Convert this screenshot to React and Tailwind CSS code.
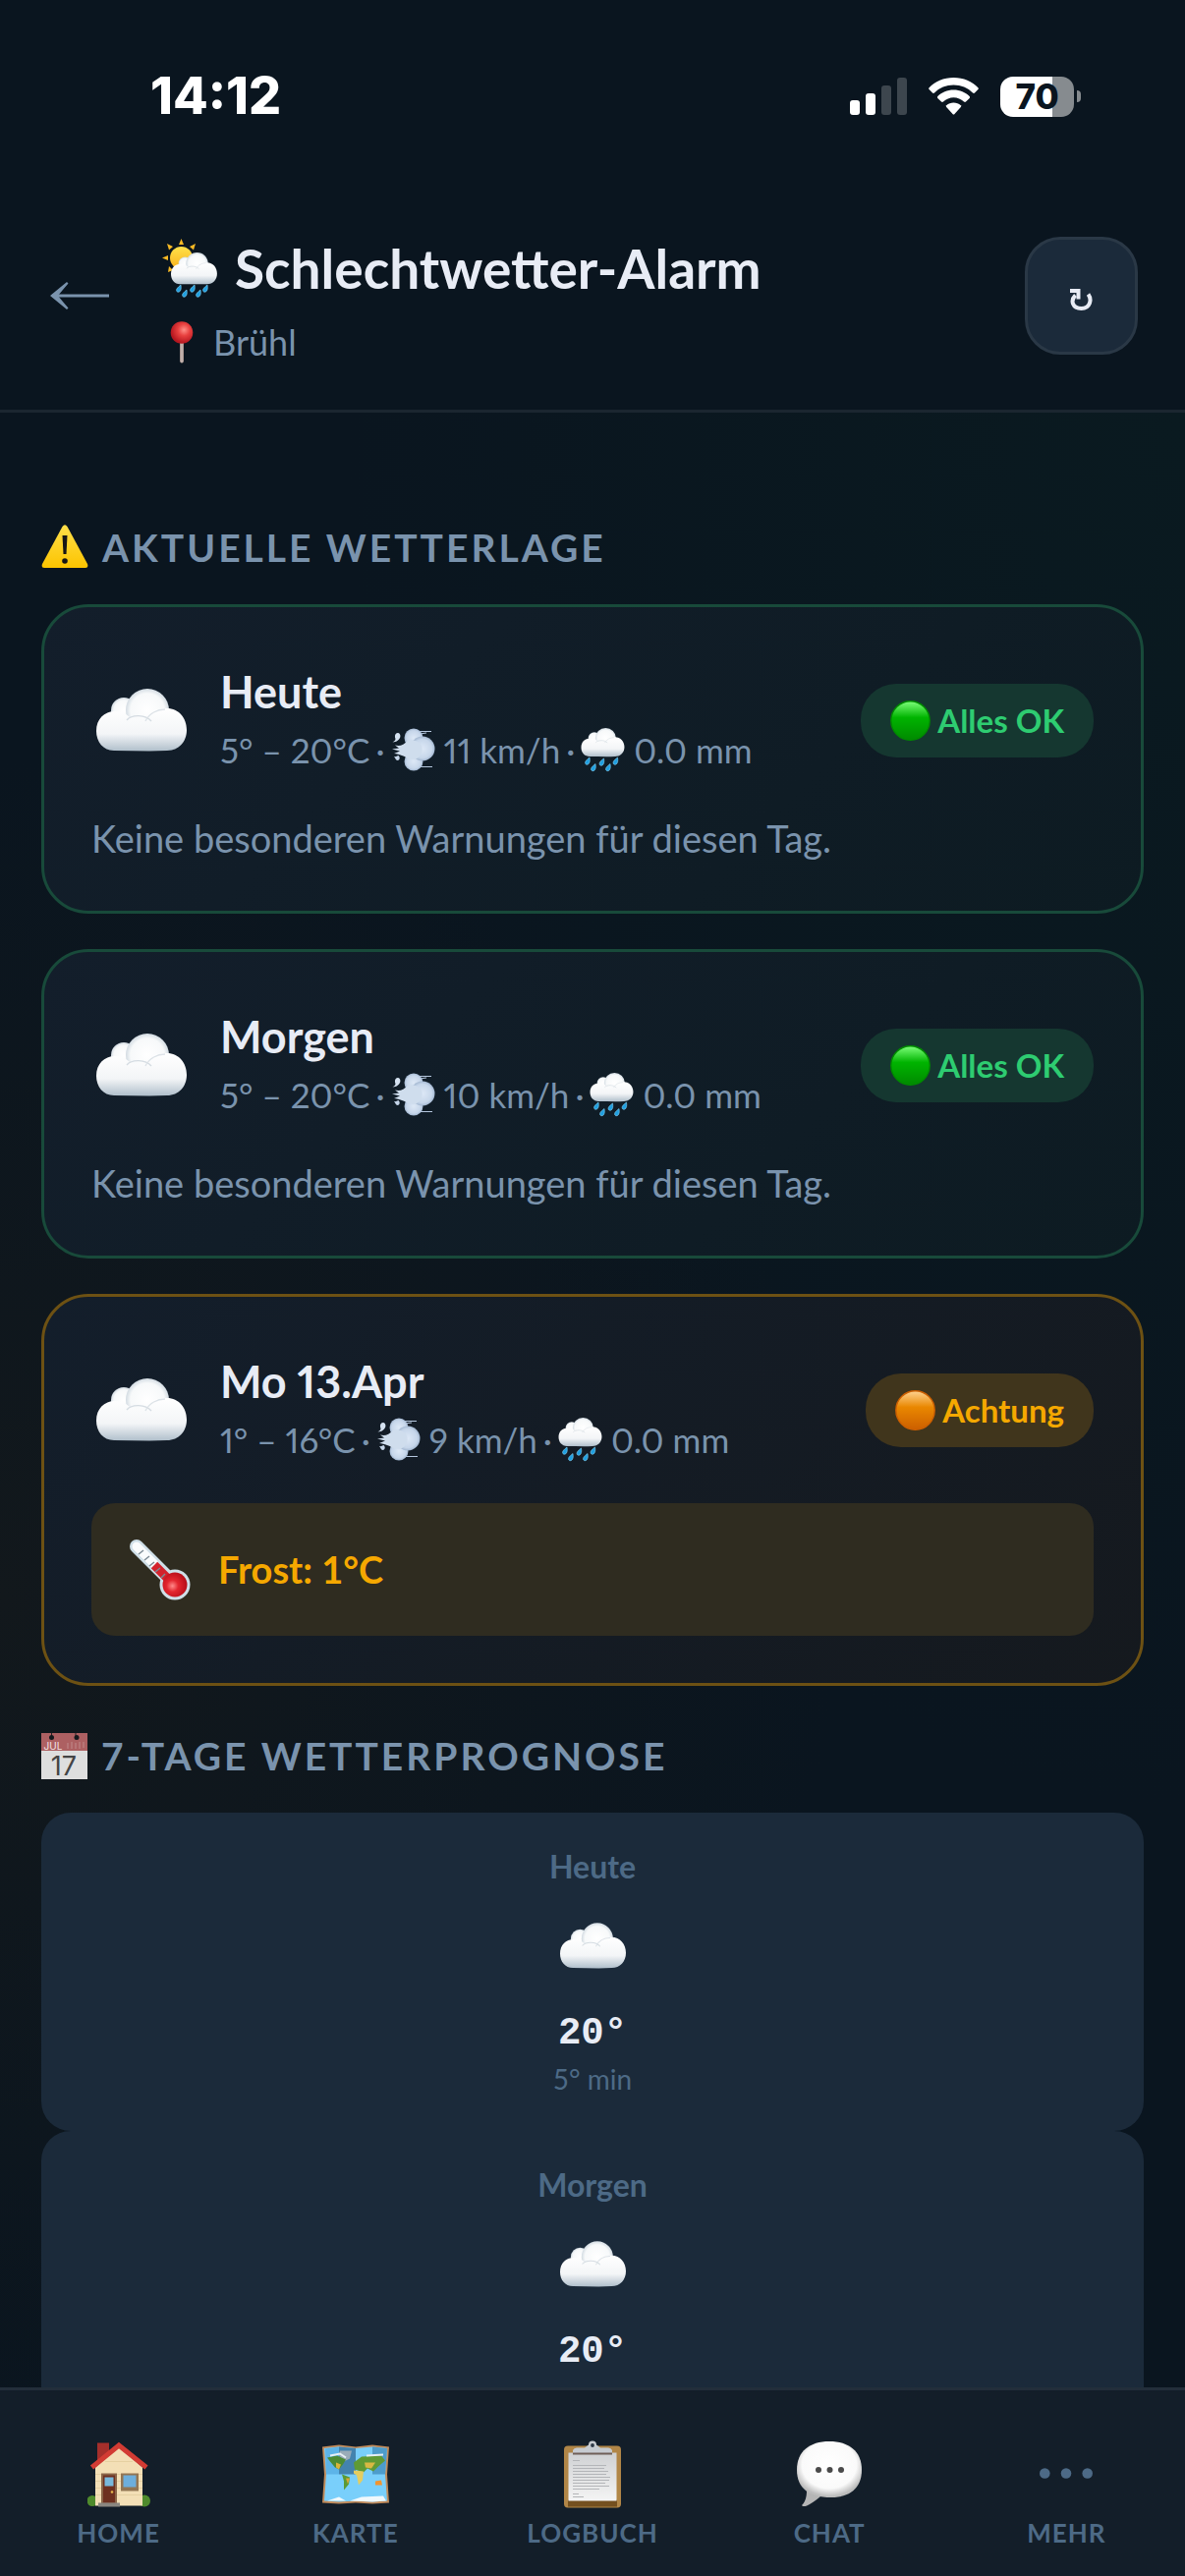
import React from "react";

/* ---------- Emoji-style drawings ---------- */

function CloudShape({ id }) {
  return (
    <>
      <defs>
        <linearGradient id={id} x1="0" y1="0" x2="0" y2="1">
          <stop offset="0" stopColor="#ffffff" />
          <stop offset="0.6" stopColor="#f3f5f7" />
          <stop offset="1" stopColor="#b0bfcb" />
        </linearGradient>
        <radialGradient id={id + "a"} cx="0.5" cy="0.5" r="0.52">
          <stop offset="0" stopColor="#ffffff" />
          <stop offset="0.75" stopColor="#f7f9fa" />
          <stop offset="1" stopColor="#ccd6de" />
        </radialGradient>
      </defs>
      <circle cx="28" cy="22" r="13" fill={`url(#${id}a)`} />
      <circle cx="52" cy="22" r="22" fill={`url(#${id}a)`} />
      <path
        d="M18 63C7 63 0 54 0 43C0 31 8 23 19 23C25 23 30 25 34 29C42 32 49 31 54 25C59 21 66 20 72 20C84 20 92 30 92 42C92 54 84 63 72 63C54 64 36 63 18 63Z"
        fill={`url(#${id})`}
      />
      <path d="M31 32C36 26 50 26 56 33" fill="none" stroke="#d5dce2" strokeWidth="1.4" />
      <path d="M50 33C54 25 62 21 70 21" fill="none" stroke="#dde3e8" strokeWidth="1.4" />
    </>
  );
}

function Cloud({ className, id }) {
  return (
    <svg className={className} viewBox="0 0 92 64" aria-hidden="true">
      <CloudShape id={id} />
    </svg>
  );
}

function Drop({ x, y }) {
  return (
    <path
      transform={`translate(${x} ${y})`}
      d="M5 0C5.600 3 5.400 6.400 3 7.200C0.900 7.700 0 5.800 0.900 4C1.800 2.400 3.500 1.300 5 0Z"
      fill="#1f9fe0"
      stroke="#86d3f5"
      strokeWidth="0.600"
    />
  );
}

function RainCloud({ className, id }) {
  return (
    <svg className={className} viewBox="0 0 45 46" aria-hidden="true">
      <g transform="translate(0.500 1) scale(0.478 0.460)">
        <CloudShape id={id} />
      </g>
      <Drop x={4} y={31} />
      <Drop x={10} y={37.5} />
      <Drop x={18.5} y={32} />
      <Drop x={25} y={37.5} />
      <Drop x={32.5} y={31} />
    </svg>
  );
}

function SunRainCloud({ className }) {
  return (
    <svg className={className} viewBox="0 0 56 60" aria-hidden="true">
      <defs>
        <linearGradient id="sun" x1="0" y1="0" x2="0" y2="1">
          <stop offset="0" stopColor="#ffe14a" />
          <stop offset="1" stopColor="#f8b21c" />
        </linearGradient>
      </defs>
      <g fill="#f7b924">
        <path d="M19.500 0L22 6L17 6Z" />
        <path d="M34 5L32 11.500L28 8Z" />
        <path d="M5 5L11 8L7 11.500Z" />
        <path d="M0 19.500L6 17L6 22Z" />
        <path d="M6 34L7 28L11 32Z" />
      </g>
      <circle cx="19.500" cy="19.500" r="11.500" fill="url(#sun)" />
      <g transform="translate(9 14) scale(0.510)">
        <CloudShape id="sunCloud" />
      </g>
      <Drop x={14} y={47} />
      <Drop x={20} y={52} />
      <Drop x={28} y={47} />
      <Drop x={34} y={52} />
      <Drop x={41} y={47} />
    </svg>
  );
}

function Pin({ className }) {
  return (
    <svg className={className} viewBox="0 0 24 43" aria-hidden="true">
      <defs>
        <radialGradient id="pin" cx="0.600" cy="0.380" r="0.600">
          <stop offset="0" stopColor="#ff8f87" />
          <stop offset="0.450" stopColor="#e8403f" />
          <stop offset="1" stopColor="#b3161f" />
        </radialGradient>
      </defs>
      <path d="M10 20H14V41Q12 44 10 41Z" fill="#a89590" />
      <path d="M12 20V42" stroke="#d8cbc7" strokeWidth="1" />
      <circle cx="12" cy="11.500" r="11.300" fill="url(#pin)" />
    </svg>
  );
}

function Warning({ className }) {
  return (
    <svg className={className} viewBox="0 0 48 48" aria-hidden="true">
      <defs>
        <linearGradient id="warn" x1="0" y1="0" x2="0" y2="1">
          <stop offset="0" stopColor="#ffdf4a" />
          <stop offset="1" stopColor="#fcc400" />
        </linearGradient>
      </defs>
      <path d="M21.500 3Q24 -0.500 26.500 3L47 41Q48.300 45 45 45H3Q-0.300 45 1 41Z" fill="url(#warn)" />
      <path d="M21.500 12H26.500L25.500 31H22.500Z" fill="#161616" />
      <circle cx="24" cy="38" r="2.800" fill="#161616" />
    </svg>
  );
}

function Wind({ className, id }) {
  return (
    <svg className={className} viewBox="0 0 45 44" aria-hidden="true">
      <defs>
        <radialGradient id={id} cx="0.500" cy="0.500" r="0.550">
          <stop offset="0" stopColor="#dde8f6" />
          <stop offset="0.700" stopColor="#c6d6ea" />
          <stop offset="1" stopColor="#94aac6" />
        </radialGradient>
      </defs>
      <path d="M28 3.500H41M29 6L36 5M29 39.500H42" stroke="#b5c7de" strokeWidth="1.200" />
      <circle cx="23" cy="34" r="9.500" fill={`url(#${id})`} />
      <circle cx="23" cy="10" r="9.500" fill={`url(#${id})`} />
      <circle cx="32" cy="21" r="12.500" fill={`url(#${id})`} />
      <path
        d="M4 17.500C9 19 13 17 17 13C22 11 28 13 31 18C33 24 30 30 24 32C17 32 15 29 11 28C8 26.500 6 26.500 3 26L9 23.500L1 21.500L8 20.500Z"
        fill="#cfdded"
      />
      <path d="M7 5C10 5.500 10.500 10 7 12.500C5.500 14 3 14 1.500 14.500C4.500 13 5 11.500 4 9.500C3.500 7 5 5 7 5Z" fill="#d5e2f1" />
      <path d="M7.500 28C9.500 29.500 9 33 6.500 33C4.500 32.500 4.500 30.500 3 29C5 29.500 6 28.500 7.500 28Z" fill="#c4d4e8" />
    </svg>
  );
}

function StatusDot({ className, id, top, mid, low }) {
  return (
    <svg className={className} viewBox="0 0 41 41" aria-hidden="true">
      <defs>
        <linearGradient id={id} x1="0" y1="0" x2="0" y2="1">
          <stop offset="0" stopColor={top} />
          <stop offset="0.420" stopColor={mid} />
          <stop offset="1" stopColor={low} />
        </linearGradient>
      </defs>
      <circle cx="20.500" cy="20.500" r="19.700" fill={`url(#${id})`} stroke={low} strokeWidth="1.400" />
    </svg>
  );
}

function Thermometer({ className }) {
  return (
    <svg className={className} viewBox="0 0 62 62" aria-hidden="true">
      <defs>
        <radialGradient id="bulb" cx="0.400" cy="0.550" r="0.600">
          <stop offset="0" stopColor="#ff8a8a" />
          <stop offset="0.400" stopColor="#e3262f" />
          <stop offset="1" stopColor="#b60d18" />
        </radialGradient>
      </defs>
      <path d="M7 7L42 42" stroke="#cfdfe8" strokeWidth="14" strokeLinecap="round" />
      <circle cx="46" cy="46" r="15.500" fill="#cfdfe8" />
      <path d="M7 7L25 25" stroke="#fafcfd" strokeWidth="9" strokeLinecap="round" />
      <path d="M25 26L40 41" stroke="#d3222c" strokeWidth="9" />
      <circle cx="46" cy="46" r="12.500" fill="url(#bulb)" />
      <path d="M9 15L14 11M15 21L20 17M20 27L25 23M26 33L31 29M32 39L36 35" stroke="#7c8a94" strokeWidth="1.500" />
    </svg>
  );
}

function Calendar({ className }) {
  return (
    <svg className={className} viewBox="0 0 47 47" aria-hidden="true">
      <rect width="47" height="47" fill="#dedede" />
      <rect width="47" height="18" fill="#ad6062" />
      <path d="M10.500 0V4M35 0V4" stroke="#222" strokeWidth="1" />
      <circle cx="10.500" cy="4.500" r="2.500" fill="#14181c" />
      <circle cx="36" cy="4.500" r="2.500" fill="#14181c" />
      <path d="M27 10V16M31 9V16M35 10V16M39 9V16M43 9V15" stroke="#c08a8b" strokeWidth="1" />
      <text x="2.500" y="16.500" className="font-['Inter',sans-serif] text-[10px] font-normal tracking-normal" fill="#f3e4e4">
        JUL
      </text>
      <text
        x="23"
        y="43"
        textAnchor="middle"
        className="font-['Inter',sans-serif] text-[27px] font-normal tracking-normal"
        fill="#444"
      >
        17
      </text>
    </svg>
  );
}

function House({ className }) {
  return (
    <svg className={className} viewBox="0 0 64 66" aria-hidden="true">
      <rect x="10" y="1" width="12" height="24" fill="#a52f2b" />
      <circle cx="5" cy="60" r="5.500" fill="#4f8a2c" />
      <circle cx="58" cy="60" r="6" fill="#4f8a2c" />
      <path d="M8 26L32 5L56 26V65H8Z" fill="#f3dfb6" />
      <path d="M8 33H56M8 40H56M8 47H56M8 54H56M18 20H46" stroke="#e2cb9d" strokeWidth="0.800" />
      <path d="M4.500 26L32 3.500L60 26" fill="none" stroke="#d23b33" strokeWidth="5" />
      <rect x="14" y="32" width="16" height="31" fill="#8a6549" />
      <rect x="16" y="34" width="12" height="28" fill="#6e3020" />
      <rect x="17.500" y="36" width="9" height="9" fill="#79b8dc" />
      <circle cx="25" cy="51" r="1.300" fill="#e9b84e" />
      <rect x="34" y="32" width="18" height="18" fill="#927552" />
      <rect x="36.500" y="34" width="13" height="12" fill="#6daedb" />
      <rect x="11" y="62" width="22" height="4" fill="#8a8680" />
    </svg>
  );
}

function WorldMap({ className }) {
  return (
    <svg className={className} viewBox="0 0 68 60" aria-hidden="true">
      <path d="M0 2L17 0L34 2L51 0L68 2L66 30L68 59L51 60L34 59L17 60L0 59L2 30Z" fill="#c08b5b" />
      <path d="M2 3.500L17 2L34 3.500L51 2L66 3.500L64 30L66 57L51 58L34 57L17 58L2 57L4 30Z" fill="#79cffb" />
      <path d="M3 4L17 2L17 30L4 30Z" fill="#5db4e8" />
      <path d="M17 2L34 3.500V30H17Z" fill="#4383ae" />
      <path d="M51 2L66 3.500L64 30H51Z" fill="#4d9ccb" />
      <path d="M18 6L30 6L28 14L22 17L17 11Z" fill="#9aacb8" />
      <path d="M5 13L15 11L24 15L21 20L17 25L13 23L8 17Z" fill="#4c8b35" />
      <path d="M14 18L19 20L17 25L14 23Z" fill="#d9b43b" />
      <path d="M20 30L28 33L27 40L22 46L22 37Z" fill="#5a9a35" />
      <path d="M24 34L28 34L26 40Z" fill="#dba630" />
      <path d="M32 18L40 12L60 11L64 16L57 22L52 27L46 24L42 28L33 25Z" fill="#5f9a35" />
      <path d="M32 26L42 27L41 36L37 41L35 31L32 29Z" fill="#e4cd61" />
      <path d="M43 18L54 18L50 24L44 23Z" fill="#d9b843" />
      <path d="M54 37L60 36L61 41L54 41Z" fill="#f1942f" />
      <path d="M5 57L17 53L24 57ZM28 57L40 53L62 52L65 57L51 58Z" fill="#f0f8fc" />
      <path d="M8 11L18 9L24 13M45 11L62 10" stroke="#e6eff3" strokeWidth="2" fill="none" />
    </svg>
  );
}

function Clipboard({ className }) {
  return (
    <svg className={className} viewBox="0 0 58 68" aria-hidden="true">
      <defs>
        <linearGradient id="paper" x1="0" y1="0" x2="0" y2="1">
          <stop offset="0" stopColor="#cfd1d3" />
          <stop offset="1" stopColor="#f4f4f4" />
        </linearGradient>
      </defs>
      <rect x="0" y="5" width="58" height="63" rx="4" fill="#b18647" />
      <rect x="4" y="60" width="50" height="7" fill="#74501f" />
      <rect x="4.500" y="12" width="49" height="49" fill="url(#paper)" />
      <path
        d="M9 20H16M9 25H43M9 28H41M9 31H45M9 34H43M9 37H47M9 40H46M9 43H42M9 46H46M9 49H36M9 54H15M9 57H20"
        stroke="#b3b5b8"
        strokeWidth="1"
      />
      <path d="M9 12.500V9.500Q10 7 13 7H21L25 4Q25 0 29 0T33 4L37 7H45Q48 7 49 9.500V12.500Z" fill="#c6cbd0" />
      <path d="M9 13H49" stroke="#6f5f58" strokeWidth="2" />
      <circle cx="29" cy="4.500" r="1.900" fill="#2c3844" />
    </svg>
  );
}

function Bubble({ className }) {
  return (
    <svg className={className} viewBox="0 0 66 67" aria-hidden="true">
      <defs>
        <radialGradient id="bubble" cx="0.500" cy="0.420" r="0.560">
          <stop offset="0" stopColor="#ffffff" />
          <stop offset="0.750" stopColor="#fafafa" />
          <stop offset="1" stopColor="#bcbcbc" />
        </radialGradient>
      </defs>
      <path d="M10 50C10 58 8 62 5 65C6 67 10 66 13 64C18 61 22 58 25 55Z" fill="#b5b5b5" />
      <path d="M33 0C53 0 66 10 66 29C66 48 53 57 35 57C13 57 0 48 0 29C0 10 13 0 33 0Z" fill="url(#bubble)" />
      <circle cx="22" cy="29" r="3" fill="#4a4a4a" />
      <circle cx="33.500" cy="29" r="3" fill="#4a4a4a" />
      <circle cx="45" cy="29" r="3" fill="#4a4a4a" />
    </svg>
  );
}

function Dots({ className }) {
  return (
    <svg className={className} viewBox="0 0 54 66" aria-hidden="true" fill="#4d6a86">
      <circle cx="5.300" cy="32" r="5.300" />
      <circle cx="27" cy="32" r="5.300" />
      <circle cx="48.700" cy="32" r="5.300" />
    </svg>
  );
}

/* ---------- Status bar ---------- */

function StatusBar() {
  return (
    <div className="flex h-[229px] items-start justify-between pt-[68px] pr-[106px] pl-[153px]">
      <span className="font-['Inter',sans-serif] text-[52px] leading-[60px] font-extrabold text-white">14:12</span>
      <div className="flex h-[60px] items-center">
        <svg className="h-[38px] w-[58px]" viewBox="0 0 58 38" aria-label="Signal">
          <rect x="0" y="23" width="10" height="15" rx="3" fill="#fff" />
          <rect x="16" y="16" width="10" height="22" rx="3" fill="#fff" />
          <rect x="32" y="8" width="10" height="30" rx="3" fill="#3d464e" />
          <rect x="48" y="0" width="10" height="38" rx="3" fill="#3d464e" />
        </svg>
        <svg className="ml-[22px] h-[38px] w-[51px]" viewBox="0 0 51 38" fill="#fff" aria-label="WLAN">
          <path d="M25.500 0C15.500 0 6.500 4 0.600 10.200Q-0.200 11.200 0.600 12L4 15.600Q5 16.400 6 15.500C11 10.600 18 7.600 25.500 7.600S40 10.600 45 15.500Q46 16.400 47 15.600L50.400 12Q51.200 11.200 50.400 10.200C44.500 4 35.500 0 25.500 0Z" />
          <path d="M25.500 12.500C19 12.500 13.500 15 9.300 19Q8.500 20 9.300 20.900L13 24.600Q14 25.400 15 24.500C17.900 21.900 21.500 20.300 25.500 20.300S33.100 21.900 36 24.500Q37 25.400 38 24.600L41.700 20.900Q42.500 20 41.700 19C37.500 15 32 12.500 25.500 12.500Z" />
          <path d="M25.500 25.500C22.700 25.500 20.200 26.600 18.200 28.200Q17.400 29.100 18.200 30L24.500 37Q25.500 38 26.500 37L32.800 30Q33.600 29.100 32.800 28.200C30.800 26.600 28.300 25.500 25.500 25.500Z" />
        </svg>
        <div className="ml-[22px] flex h-[41px] w-[75px] items-center justify-center overflow-hidden rounded-[13px] bg-[linear-gradient(90deg,#fff_71%,#868b8f_71%)] font-['Inter',sans-serif] text-[35px] leading-none font-extrabold text-[#0a151f]">
          70
        </div>
        <div className="ml-[3px] h-[12px] w-[4px] rounded-r-full bg-[#868b8f]" />
      </div>
    </div>
  );
}

/* ---------- Page parts ---------- */

function Header() {
  return (
    <header className="flex items-center border-b-[3px] border-[#1b2630] pr-[48px] pb-[44px] pl-[48px]">
      <button type="button" aria-label="Zurück" className="w-[66px] shrink-0">
        <svg className="h-[28px] w-[66px]" viewBox="0 0 66 28" aria-hidden="true">
          <path d="M5 14H63" stroke="#7a93ad" strokeWidth="3" />
          <path d="M3 14L20 0L21.500 1.500Q15 9 11 14Q15 19 21.500 26.500L20 28Z" fill="#7a93ad" />
        </svg>
      </button>
      <div className="ml-[51px] flex-1 pt-[10px]">
        <h1 className="flex items-center gap-[18px] text-[55px] leading-[68px] font-bold text-[#e8ecf5]">
          <SunRainCloud className="h-[60px] w-[56px] shrink-0" />
          <span>Schlechtwetter-Alarm</span>
        </h1>
        <p className="mt-[16px] flex items-center gap-5 pl-2 text-[36px] leading-[50px] text-[#7a93ad]">
          <Pin className="h-[43px] w-[24px]" />
          <span>Brühl</span>
        </p>
      </div>
      <button
        type="button"
        aria-label="Aktualisieren"
        className="flex h-[120px] w-[115px] items-center justify-center rounded-[36px] border-[3px] border-[#2a3846] bg-[#1b2a3a] pt-2"
      >
        <svg className="h-[22px] w-[23px]" viewBox="0 0 23 22" aria-hidden="true" fill="none" stroke="#e8ecf5">
          <path d="M5.500 6.500C0 12 2.500 20 11.500 20C20.500 20 22.500 11 18.500 5.500" strokeWidth="4" />
          <path d="M0 2H8.500V10.500" strokeWidth="4" />
        </svg>
      </button>
    </header>
  );
}

function SectionTitle({ icon, children }) {
  return (
    <h2 className="flex items-center gap-[14px] text-[39px] leading-[50px] font-bold tracking-[3px] text-[#7a93ad] uppercase">
      {icon}
      <span>{children}</span>
    </h2>
  );
}

const LEVELS = {
  ok: {
    card: "border-[#184a3a] bg-[linear-gradient(135deg,#131e2b_0%,#0d1b22_100%)]",
    badge: "bg-[#153730] text-[#2ecc71]",
    label: "Alles OK",
    dot: { top: "#7dff7a", mid: "#00b400", low: "#008a00" },
  },
  warn: {
    card: "border-[#6d5113] bg-[linear-gradient(135deg,#131e2b_0%,#15191e_100%)]",
    badge: "bg-[#40351c] text-[#f5a800]",
    label: "Achtung",
    dot: { top: "#ffd391", mid: "#e98700", low: "#cc5f00" },
  },
};

function DayCard({ id, level, day, temp, wind, rain, note, alert }) {
  const l = LEVELS[level];
  return (
    <article className={`rounded-[48px] border-[3px] px-[48px] pt-[56px] pb-[48px] ${l.card}`}>
      <div className="flex items-center">
        <Cloud id={id + "c"} className="ml-[5px] h-[64px] w-[92px] shrink-0" />
        <div className="ml-[34px] flex-1 proportional-nums">
          <h3 className="text-[45px] leading-[60px] font-bold text-[#e8ecf5]">{day}</h3>
          <p className="flex items-center text-[35px] leading-[58px] text-[#7a93ad]">
            <span>{temp}</span>
            <span className="mx-[6px]">·</span>
            <Wind id={id + "w"} className="h-[44px] w-[45px]" />
            <span className="ml-[9px]">{wind}</span>
            <span className="mx-[6px]">·</span>
            <RainCloud id={id + "r"} className="h-[46px] w-[45px]" />
            <span className="ml-[9px]">{rain}</span>
          </p>
        </div>
        <span
          className={`flex h-[75px] items-center gap-[7px] rounded-[36px] px-[30px] text-[33px] leading-none font-bold ${l.badge}`}
        >
          <StatusDot id={id + "d"} className="h-[41px] w-[41px]" {...l.dot} />
          {l.label}
        </span>
      </div>
      {note && <p className="mt-[36px] text-[38px] leading-[51px] text-[#7a93ad]">{note}</p>}
      {alert && (
        <div className="mt-[36px] flex h-[135px] items-center gap-[28px] rounded-[24px] bg-[#2f2c20] pl-[39px] text-[38px] font-bold text-[#f5a800]">
          <Thermometer className="h-[62px] w-[62px]" />
          <span>{alert}</span>
        </div>
      )}
    </article>
  );
}

function ForecastCard({ id, day, max, min }) {
  return (
    <li className="flex h-[324px] shrink-0 flex-col items-center rounded-[30px] bg-[#1b2a3a] pt-[34px]">
      <span className="text-[32px] leading-[42px] font-bold text-[#4d6a86]">{day}</span>
      <Cloud id={id} className="mt-[36px] h-[47px] w-[67px]" />
      <span className="mt-[41px] font-['Liberation_Mono',monospace] text-[39px] leading-[50px] font-bold text-[#e8ecf5]">
        {max}
      </span>
      <span className="text-[28px] leading-[42px] text-[#4d6a86]">{min}</span>
    </li>
  );
}

const NAV = [
  { label: "Home", Icon: House, size: "w-[64px]" },
  { label: "Karte", Icon: WorldMap, size: "w-[68px]" },
  { label: "Logbuch", Icon: Clipboard, size: "w-[58px]" },
  { label: "Chat", Icon: Bubble, size: "w-[66px]" },
  { label: "Mehr", Icon: Dots, size: "w-[54px]" },
];

function BottomNav() {
  return (
    <nav className="grid grid-cols-5 border-t-[3px] border-[#232e3a] bg-[#131e29] pt-[51px] pb-[26px]">
      {NAV.map(({ label, Icon, size }) => (
        <a
          key={label}
          href={"#" + label.toLowerCase()}
          className="flex flex-col items-center gap-[7px] text-[26px] leading-[36px] font-bold tracking-[1px] text-[#4d6a86] uppercase"
        >
          <Icon className={`h-[69px] ${size}`} />
          {label}
        </a>
      ))}
    </nav>
  );
}

const DAYS = [
  { id: "d0", level: "ok", day: "Heute", temp: "5° – 20°C", wind: "11 km/h", rain: "0.0 mm", note: "Keine besonderen Warnungen für diesen Tag." },
  { id: "d1", level: "ok", day: "Morgen", temp: "5° – 20°C", wind: "10 km/h", rain: "0.0 mm", note: "Keine besonderen Warnungen für diesen Tag." },
  { id: "d2", level: "warn", day: "Mo 13.Apr", temp: "1° – 16°C", wind: "9 km/h", rain: "0.0 mm", alert: "Frost: 1°C" },
];

const FORECAST = [
  { id: "f0", day: "Heute", max: "20°", min: "5° min" },
  { id: "f1", day: "Morgen", max: "20°", min: "5° min" },
];

export default function App() {
  return (
    <div className="flex h-screen flex-col bg-[#0a151f] font-['Lato',sans-serif]">
      <StatusBar />
      <Header />
      <main className="min-h-0 flex-1 overflow-y-auto bg-[radial-gradient(ellipse_at_0%_60%,#12181c_0%,transparent_50%),radial-gradient(ellipse_at_100%_0%,#0a1a20_0%,transparent_50%)] px-[42px] pt-[112px] [scrollbar-width:none]">
        <SectionTitle icon={<Warning className="h-[48px] w-[48px]" />}>Aktuelle Wetterlage</SectionTitle>
        <div className="mt-[33px] flex flex-col gap-[36px]">
          {DAYS.map((d) => (
            <DayCard key={d.id} {...d} />
          ))}
        </div>
        <div className="mt-[46px]">
          <SectionTitle icon={<Calendar className="h-[47px] w-[47px]" />}>7-Tage Wetterprognose</SectionTitle>
        </div>
        <ul className="mt-[33px] flex flex-col">
          {FORECAST.map((f) => (
            <ForecastCard key={f.id} {...f} />
          ))}
        </ul>
      </main>
      <BottomNav />
    </div>
  );
}
